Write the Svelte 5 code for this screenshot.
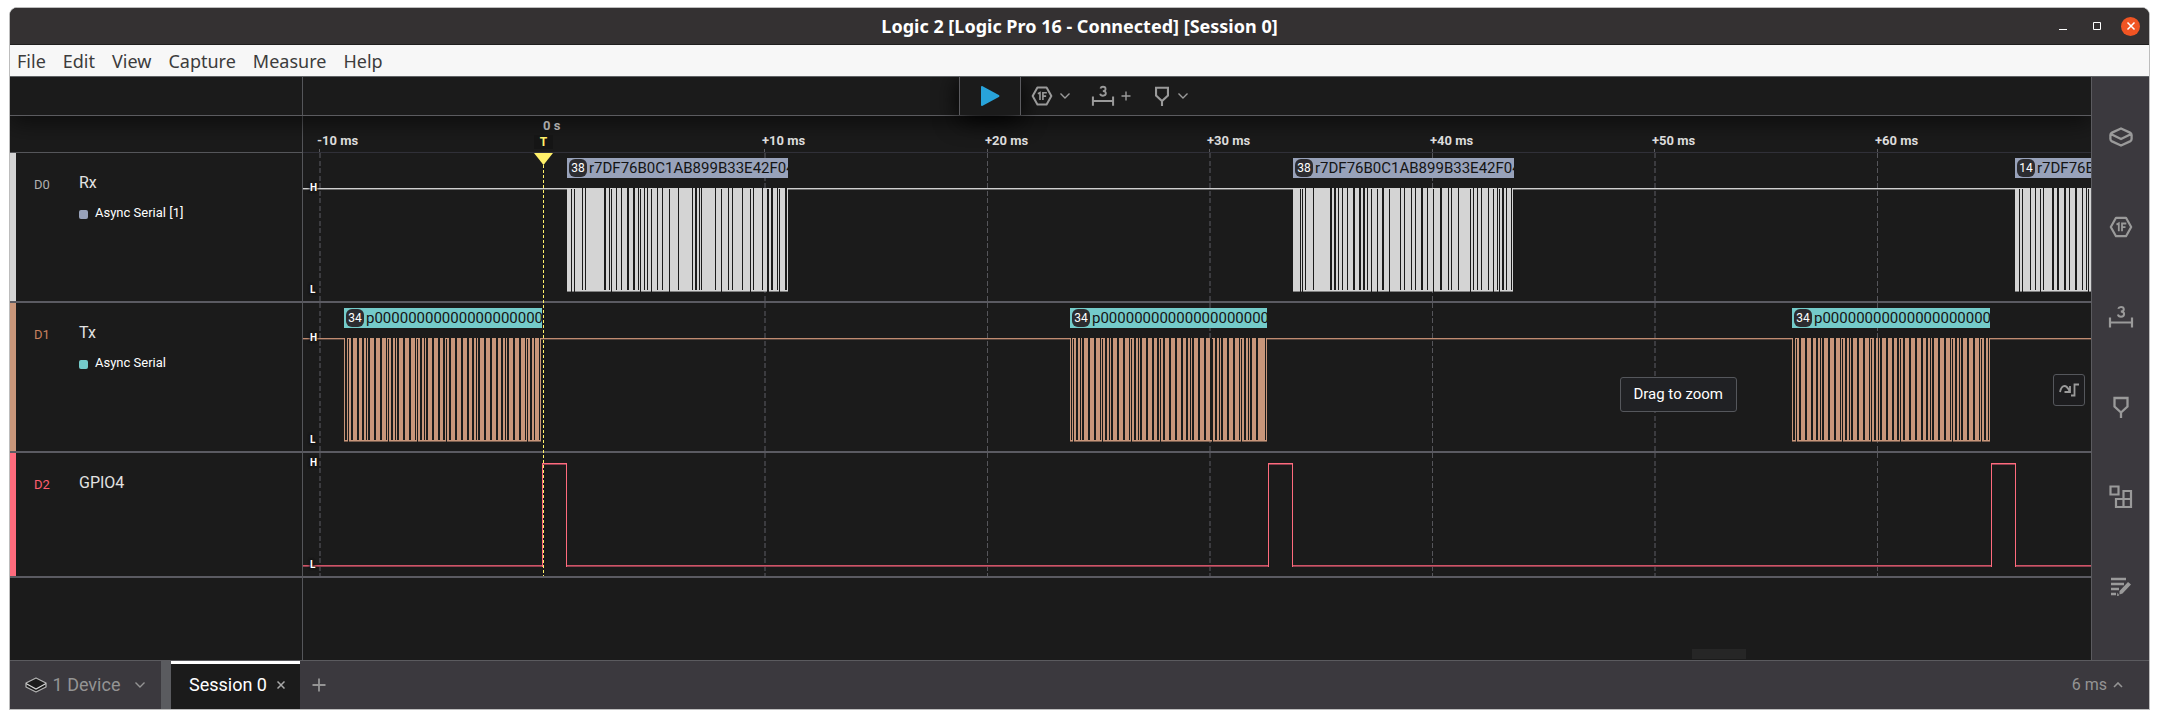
<script>
  const menus = ['File', 'Edit', 'View', 'Capture', 'Measure', 'Help'];

  // Horizontal position of the trigger and of the 10 ms marks in the graph.
  const ZERO = 240;
  const ticks = [
    { label: '-10 ms', x: 16, w: 2 },
    { label: '+10 ms', x: 461, w: 2 },
    { label: '+20 ms', x: 684, w: 1 },
    { label: '+30 ms', x: 906, w: 2 },
    { label: '+40 ms', x: 1129, w: 1 },
    { label: '+50 ms', x: 1351, w: 2 },
    { label: '+60 ms', x: 1574, w: 1 }
  ];

  // Each gap is "offset[w][H]": w = two pixels wide, H = open towards the bottom.
  const parse = (text) =>
    text.split(' ').map((g) => ({
      x: parseInt(g),
      w: g.includes('w') ? 2 : 1,
      high: g.includes('H')
    }));

  const rx = [
    { x: 264, w: 221, lw: 221, badge: '38', gaps: parse('4H 7H 15 18 37w 42 44H 49 54 60w 66w 71 73H 77 80 84H 90 95 102H 111 125 128w 132 134 148 154H 161 165 175 183H 186 195 200wH 204w 210 212H 218w') },
    { x: 990, w: 220, lw: 221, badge: '38', gaps: parse('7H 9H 12 20 37w 41w 45 49 54 60w 66w 70w 74 78H 84H 89w 96H 107 111 118 122 128w 134 140H 147w 155 158 165 177H 180 184 188 195 200H 204 206H 209w 213 218') },
    { x: 1712, w: 221, lw: 221, badge: '14', gaps: parse('4H 7H 15 20 25H 28 37w 42w 49w 54 60w 67 71 73H 78 84H 90 98 105w 112 120') }
  ];
  const tx = [
    { x: 41, w: 197, lw: 198, badge: '34', gaps: parse('1w 4H 7w 13w 18w 22 24w 30w 36w 42 44H 47w 51 53w 59w 65w 71 73H 76w 80 82w 88w 94w 99w 102H 105w 111w 117w 123w 128w 132 134w 140w 146w 152w 157w 161 163w 169w 175w 181 183H 186w 190 195') },
    { x: 767, w: 197, lw: 197, badge: '34', gaps: parse('1 3H 6w 10 12w 18w 24w 30 32H 35w 39 41w 47w 53w 59 61H 64w 68 70w 76w 82w 87w 90H 93w 99w 105w 111w 116w 120 122w 128w 134w 140w 142H 145w 149 151w 157w 163w 169 171H 174w 178 180w 186w 195') },
    { x: 1489, w: 198, lw: 198, badge: '34', gaps: parse('1w 4H 7w 13w 19w 24w 28 30w 36w 42w 48 50H 53w 57 59w 65w 71w 77 79H 82w 86 88w 94w 100w 105w 108H 111w 117w 123w 129w 134w 138 140w 146w 152w 158 160H 163w 167 169w 175w 181w 187 189H 192w 196') }
  ];

  const rows = [
    { id: 'D0', name: 'Rx', tone: 'rx', analyzer: 'Async Serial [1]', top: 0, high: 35, bursts: rx, text: 'r7DF76B0C1AB899B33E42F04' },
    { id: 'D1', name: 'Tx', tone: 'tx', analyzer: 'Async Serial', top: 150, high: 185, bursts: tx, text: 'p00000000000000000000' },
    { id: 'D2', name: 'GPIO4', tone: 'gpio', analyzer: '', top: 300, high: 310, bursts: [], text: '' }
  ];
  const serial = rows.slice(0, 2);
  const pulses = [[239, 263], [965, 989], [1688, 1712]];

  // Idle-high segments between the bursts of one row.
  function idle(bursts) {
    const out = [];
    let from = 0;
    for (const b of bursts) {
      out.push({ x: from, w: b.x - from });
      from = b.x + b.w;
    }
    out.push({ x: from, w: 6000 });
    return out;
  }
  function lows() {
    const out = [];
    let from = 0;
    for (const [a, b] of pulses) {
      out.push({ x: from, w: a - from });
      from = b;
    }
    out.push({ x: from, w: 6000 });
    return out;
  }
</script>

{#snippet hex()}
  <svg class="icon" width="24" height="24" viewBox="0 0 24 24" aria-hidden="true">
    <path d="M7 2.8h10l5.2 9.2-5.2 9.2H7L1.8 12z" fill="none" stroke="currentColor" stroke-width="2.200" stroke-linejoin="round" />
    <path d="M7.5 9.6l2.3-1.3v8M13 16.3v-7.8h4.3M13 12.2h3.5" fill="none" stroke="currentColor" stroke-width="1.800" />
  </svg>
{/snippet}
{#snippet measure()}
  <svg class="icon" width="26" height="24" viewBox="0 0 26 24" aria-hidden="true">
    <path d="M2 12.500v10M24 12.500v10M2 17.500h22" fill="none" stroke="currentColor" stroke-width="2.200" />
    <path d="M10.200 3.800c.4-1.200 1.400-1.900 2.800-1.900 1.700 0 2.800.9 2.800 2.400s-1.200 2.300-3 2.300c2 0 3.300.8 3.300 2.500 0 1.600-1.300 2.600-3.100 2.600-1.700 0-2.800-.8-3.100-2.200" fill="none" stroke="currentColor" stroke-width="2" />
  </svg>
{/snippet}
{#snippet marker()}
  <svg class="icon" width="20" height="24" viewBox="0 0 20 24" aria-hidden="true">
    <path d="M3.500 3h13v8.500L10 17.500l-6.500-6zM10 17v6" fill="none" stroke="currentColor" stroke-width="2.300" />
  </svg>
{/snippet}
{#snippet chevron()}
  <svg class="icon" width="12" height="8" viewBox="0 0 12 8" aria-hidden="true">
    <path d="M1.500 1.500L6 6l4.500-4.500" fill="none" stroke="currentColor" stroke-width="1.400" />
  </svg>
{/snippet}

<div class="desktop">
  <div class="window">
    <header class="titlebar">
      <h1>Logic 2 [Logic Pro 16 - Connected] [Session 0]</h1>
      <div class="controls">
        <button aria-label="Minimize"><svg width="10" height="10"><path d="M1 8.500h8" stroke="#fff" /></svg></button>
        <button aria-label="Maximize"><svg width="10" height="10"><path d="M1.500 1.500h7v7h-7z" fill="none" stroke="#fff" /></svg></button>
        <button class="close" aria-label="Close"><svg width="10" height="10"><path d="M1.500 1.500l7 7M8.500 1.500l-7 7" stroke="#fff" stroke-width="1.500" /></svg></button>
      </div>
    </header>

    <nav class="menubar">
      {#each menus as m}<button>{m}</button>{/each}
    </nav>

    <div class="body">
      <main>
        <div class="toolbar">
          <div class="tools">
            <button class="play" aria-label="Start capture">
              <svg width="20" height="22" viewBox="0 0 20 22"><path d="M1 2c0-1 .8-1.300 1.600-.8L18.800 10c.9.600.9 1.400 0 2L2.600 20.800C1.800 21.300 1 21 1 20z" fill="#28a3da" /></svg>
            </button>
            <button class="tool" aria-label="Add analyzer">{@render hex()}{@render chevron()}</button>
            <button class="tool" aria-label="Add measurement">
              {@render measure()}
              <svg class="icon" width="10" height="10" viewBox="0 0 10 10"><path d="M5 .5v9M.5 5h9" stroke="currentColor" stroke-width="1.400" /></svg>
            </button>
            <button class="tool" aria-label="Add marker">{@render marker()}{@render chevron()}</button>
          </div>
        </div>

        <div class="session">
          <section class="channels">
            <div class="corner"></div>
            {#each rows as r}
              <div class="channel {r.tone}">
                <span class="strip"></span>
                <span class="code">{r.id}</span>
                <div class="names">
                  <span class="name">{r.name}</span>
                  {#if r.analyzer}<span class="analyzer"><i></i>{r.analyzer}</span>{/if}
                </div>
              </div>
            {/each}
          </section>

          <section class="graph">
            <div class="ruler">
              {#each ticks as t}
                <span class="tick" style:left="{t.x}px">{t.label}</span>
              {/each}
              <span class="origin" style:left="{ZERO}px">0 s</span>
              <span class="trigger" style:left="{ZERO - 9}px">T</span>
            </div>

            <div class="plot">
              <svg class="layer" shape-rendering="crispEdges" aria-hidden="true">
                {#each ticks as t}
                  <path d="M{t.x + t.w / 2} 0V423" class="gridline" class:soft={t.w === 2} stroke-width={t.w} />
                {/each}
                {#each [148, 298, 423] as y}
                  <rect x="0" {y} width="100%" height="2" fill="#5b5b62" />
                {/each}
                {#each serial as r}
                  <g class={r.tone}>
                    {#each idle(r.bursts) as s}
                      <rect class="line" x={s.x} y={r.high} width={s.w} height="1" />
                      <rect class="dim" x={s.x} y={r.high + 1} width={s.w} height="1" />
                    {/each}
                    {#each r.bursts as b}
                      <rect class="fill" x={b.x} y={r.high} width={b.w} height="103" />
                      <rect class="foot" x={b.x} y={r.high + 103} width={b.w} height="1" />
                      {#each b.gaps as g}
                        <rect x={b.x + g.x} y={g.high ? r.high + 1 : r.high} width={g.w} height={g.high ? 103 : 102} fill="#1b1b1b" />
                      {/each}
                    {/each}
                  </g>
                {/each}
                <g class="gpio">
                  {#each lows() as s}
                    <rect class="line" x={s.x} y="412" width={s.w} height="1" />
                    <rect class="dim" x={s.x} y="413" width={s.w} height="1" />
                  {/each}
                  {#each pulses as [a, b]}
                    <rect class="dim" x={a} y="311" width={b - a} height="1" />
                    <path d="M{a}.5 414V310.500H{b}.500V414" fill="none" class="edge" />
                  {/each}
                </g>
              </svg>

              {#each rows as r}
                {#each r.bursts as b}
                  <div class="frame {r.tone}" style:left="{b.x}px" style:top="{r.top + 5}px" style:width="{b.lw}px">
                    <b>{b.badge}</b><span>{r.text}</span>
                  </div>
                {/each}
                <span class="level" style:top="{r.high - 7}px">H</span>
                <span class="level" style:top="{r.high + 95}px">L</span>
              {/each}

              <svg class="layer" aria-hidden="true">
                <path d="M{ZERO}.5 12V423" stroke="#fff06a" stroke-dasharray="3 2" />
                <path d="M{ZERO - 9} 0h19l-9.500 12z" fill="#fff06a" />
              </svg>

              <div class="tooltip" role="tooltip">Drag to zoom</div>
              <button class="snap" aria-label="Glitch filter">
                <svg width="20" height="14" viewBox="0 0 20 14"><path d="M1 9c1-4.500 2.500-6 4.500-6S9 5 10.500 8M11 3v6H5.500M12 12.500h3.500v-11H20" fill="none" stroke="currentColor" stroke-width="1.800" /></svg>
              </button>
              <span class="scroll"></span>
            </div>
          </section>
        </div>
      </main>

      <aside>
        <button aria-label="Device">
          <svg class="icon" width="24" height="20" viewBox="0 0 24 20" aria-hidden="true"><path d="M12 1.500L21 5.600q1.600.8 1.600 2.400v4q0 1.600-1.600 2.400L12 18.500l-9-4.100Q1.400 13.600 1.400 12V8q0-1.600 1.600-2.400zM1.800 7L12 12l10.200-5" fill="none" stroke="currentColor" stroke-width="2.300" stroke-linejoin="round" /></svg>
        </button>
        <button aria-label="Analyzers">{@render hex()}</button>
        <button aria-label="Measurements">{@render measure()}</button>
        <button aria-label="Markers">{@render marker()}</button>
        <button aria-label="Extensions">
          <svg class="icon" width="24" height="24" viewBox="0 0 24 24" aria-hidden="true"><path d="M1.500 1.500h8v8h-8zM14.500 6h7.500v16H7v-8h7.500zM14.500 14v8M14.500 14H22" fill="none" stroke="currentColor" stroke-width="2.200" /></svg>
        </button>
        <button aria-label="Notes">
          <svg class="icon" width="20" height="20" viewBox="0 0 20 20" aria-hidden="true"><path d="M0 2h15M0 7h13M0 12h8M0 17h5" stroke="currentColor" stroke-width="2.400" fill="none" /><path d="M6.500 15.500l1.800 3-2.300.5zM8.500 14l8.500-9 3 2.500-8.500 9-3 1z" fill="currentColor" /></svg>
        </button>
      </aside>
    </div>

    <footer>
      <button class="device">
        <svg width="22" height="16" viewBox="0 0 22 16" aria-hidden="true"><path d="M1 6v4l10 5 10-5V6L11 1z" fill="#1b1b1b" stroke="#b5b5b5" stroke-width="1.200" stroke-linejoin="round" /><path d="M1 6.500L11 12l10-5.500" fill="none" stroke="#d5d5d5" stroke-width="1.200" /></svg>
        <span>1 Device</span>
        {@render chevron()}
      </button>
      <span class="divider"></span>
      <div class="tab">
        <button>Session 0</button>
        <button class="x" aria-label="Close session"><svg width="8" height="8" viewBox="0 0 8 8"><path d="M.5.500l7 7M7.500.500l-7 7" stroke="currentColor" stroke-width="1.500" /></svg></button>
      </div>
      <button class="add" aria-label="New session"><svg width="14" height="14" viewBox="0 0 14 14"><path d="M7 .5v13M.5 7h13" stroke="currentColor" stroke-width="1.800" /></svg></button>
      <button class="span">
        6 ms
        <svg width="10" height="6" viewBox="0 0 10 6"><path d="M1 5l4-4 4 4" fill="none" stroke="currentColor" stroke-width="1.600" /></svg>
      </button>
    </footer>
  </div>
</div>

<style>
  :global(body) { background: #fff; }
  * { box-sizing: border-box; }
  button {
    margin: 0; padding: 0; border: 0; background: none; color: inherit;
    font: inherit; display: inline-flex; align-items: center; justify-content: center;
  }
  svg { display: block; }
  .desktop {
    min-height: 100vh; display: flex; padding: 7px 9px 9px;
    font-family: Roboto, sans-serif; font-size: 16px; line-height: 20px;
  }
  .window {
    flex: 1; min-width: 0; display: flex; flex-direction: column; overflow: hidden;
    border: 1px solid #bdbdbd; border-radius: 8px 8px 0 0; background: #1b1b1b;
  }

  .titlebar {
    position: relative; height: 37px; background: #343132; border-bottom: 1px solid #1f1e1e;
    display: flex; align-items: center; justify-content: center;
  }
  h1 { margin: 0; color: #fff; font: bold 18px/24px "Noto Sans", sans-serif; }
  .controls { position: absolute; right: 9px; top: 0; height: 36px; display: flex; align-items: center; gap: 14px; }
  .controls button { width: 20px; height: 20px; }
  .controls .close { border-radius: 50%; background: #f05423; width: 19px; height: 19px; }

  .menubar {
    height: 32px; display: flex; align-items: center; gap: 17px; padding-left: 7px;
    background: #f7f7f7; border-bottom: 1px solid #606366; color: #3c3c3c;
    font: 18px/24px "Noto Sans", sans-serif;
  }

  .body { flex: 1; display: flex; min-height: 0; }
  main { flex: 1; min-width: 0; display: flex; flex-direction: column; overflow: hidden; }

  .toolbar {
    position: relative; z-index: 2; height: 39px; padding-left: 58px;
    display: flex; justify-content: center; background: #1b1b1b;
    border-bottom: 1px solid #5b5b5f; box-shadow: 0 6px 24px rgba(0, 0, 0, 0.6);
  }
  .toolbar::before {
    content: ""; position: absolute; left: 292px; top: 0; bottom: 0; width: 1px; background: #55565a;
  }
  .tools { display: flex; color: #9a9a9a; }
  .play {
    width: 62px; border: solid #5b5b5f; border-width: 0 1px; background: #1b1b1b;
    box-shadow: 0 4px 24px #000;
  }
  .tool { position: relative; gap: 5px; width: 60px; }
  .tool .icon:first-child { height: 22px; }

  .session { flex: 1; display: flex; min-height: 0; }
  .channels { width: 293px; border-right: 1px solid #55565a; }
  .corner { height: 37px; border-bottom: 1px solid #55565a; }
  .channel { display: flex; height: 150px; border-bottom: 2px solid #5b5b62; color: #e2e2e2; }
  .channel.gpio { height: 125px; }
  .strip { width: 6px; background: var(--tone); }
  .code { width: 45px; margin-left: 18px; padding-top: 22px; font-size: 13px; color: var(--code); }
  .names { padding-top: 20px; display: flex; flex-direction: column; gap: 10px; }
  .analyzer { display: flex; align-items: center; gap: 7px; font-size: 13px; color: #fff; }
  .analyzer i { width: 9px; height: 9px; border-radius: 2px; background: var(--label); margin-top: 2px; }

  .rx { --tone: #d4d4d4; --code: #b0b0b0; --label: #98a2ba; --line: #cfcfcf; --dim: #676767; }
  .tx { --tone: #c9967a; --code: #c9815f; --label: #74cbca; --line: #c08b70; --dim: #54423a; }
  .gpio { --tone: #ff6b7d; --code: #ff5e70; --line: #cf5366; --dim: #8f4150; }
  .line { fill: var(--line); }
  .dim { fill: var(--dim); }
  .fill { fill: var(--tone); }
  .foot { fill: var(--tone); opacity: 0.55; }
  .edge { stroke: var(--tone); }
  .gridline { stroke: #55555a; stroke-dasharray: 5 3 5 2; }
  .gridline.soft { stroke: #3b3b3f; }

  .graph { flex: 1; min-width: 0; display: flex; flex-direction: column; overflow: hidden; }
  .ruler {
    position: relative; z-index: 3; height: 37px; border-bottom: 1px solid #303038; white-space: nowrap;
    font-size: 13px; font-weight: bold; color: #dcdcdc; overflow: hidden;
  }
  .ruler span { position: absolute; }
  .tick { top: 15px; margin-left: -2px; }
  .tick::after {
    content: ""; position: absolute; left: 2px; top: 18px; height: 4px; width: 1px; background: #5b5b5f;
  }
  .origin { top: 0; color: #a8a8a8; }
  .trigger {
    top: 19px; width: 19px; line-height: 14px; text-align: center; font-size: 12px;
    color: #fff06a; background: #151515;
  }

  .plot { position: relative; flex: 1; overflow: hidden; }
  .layer { position: absolute; inset: 0; width: 100%; height: 100%; }
  .frame {
    position: absolute; height: 20px; padding-left: 2px; display: flex; align-items: center; gap: 2px;
    overflow: hidden; white-space: nowrap; background: var(--label); color: #141414; font-size: 15px;
  }
  .frame b {
    flex: none; width: 18px; height: 18px; border-radius: 6px; background: #2c2c30; color: #fff;
    font-weight: normal; font-size: 12px; line-height: 18px; text-align: center;
  }
  .level {
    position: absolute; left: 7px; font-size: 10px; line-height: 14px; font-weight: bold; color: #fff;
    text-shadow: 0 0 2px #111, 0 0 3px #111, 0 0 3px #111;
  }
  .tooltip {
    position: absolute; right: 354px; top: 224px; padding: 7px 13px 7px 12px; border: 1px solid #55575c;
    border-radius: 3px; background: #202124; color: #fff; font-size: 15px; line-height: 19px;
  }
  .snap {
    position: absolute; right: 6px; top: 221px; width: 32px; height: 32px;
    border: 1px solid #55575c; border-radius: 3px; color: #9a9a9a; background: #1d1d1f;
  }
  .scroll { position: absolute; right: 345px; bottom: 1px; width: 54px; height: 10px; background: #262626; }

  aside {
    width: 58px; padding-top: 15px; display: flex; flex-direction: column;
    background: #3b393e; border-left: 1px solid #5b5b5f; color: #9a9a9a;
  }
  aside button { height: 90px; }

  footer {
    height: 49px; display: flex; border-top: 1px solid #5b5b5f; background: #3b393e;
    color: #949494; font-size: 18px;
  }
  .device { width: 151px; gap: 6px; }
  .device .icon { margin-left: 8px; }
  .divider { width: 10px; background: #5a5b5f; }
  .tab {
    width: 129px; display: flex; align-items: center; justify-content: center; gap: 10px;
    padding: 0 0 3px 3px; background: #1b1b1b; border-top: 3px solid #fff; color: #fff;
  }
  .tab .x { color: #a8a8a8; }
  .add { width: 38px; }
  .span { margin-left: auto; padding-right: 26px; gap: 6px; font-size: 16px; }
</style>
